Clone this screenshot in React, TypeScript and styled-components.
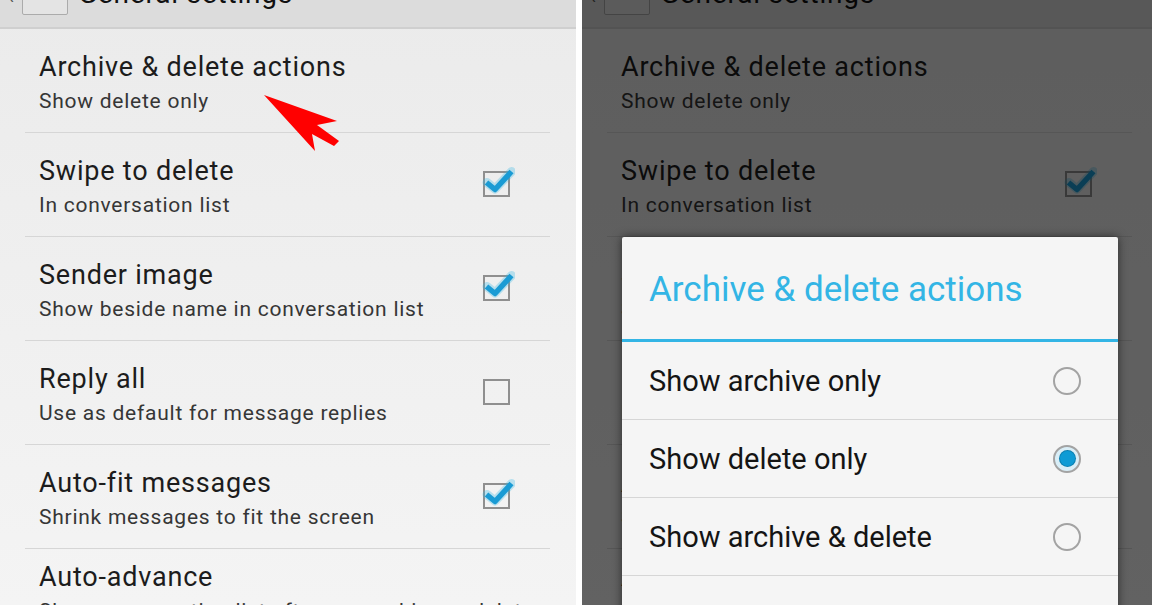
import React from "react";
import styled, { createGlobalStyle } from "styled-components";

const GlobalStyle = createGlobalStyle`
  html, body {
    margin: 0;
    padding: 0;
    background: #ffffff;
    font-family: Roboto, "Noto Sans", sans-serif;
  }
`;

const Page = styled.div`
  width: 1152px;
  height: 605px;
  display: flex;
  gap: 6px;
  overflow: hidden;
  background: #ffffff;
`;

const Panel = styled.div<{ $width: number }>`
  position: relative;
  width: ${(p) => p.$width}px;
  flex: none;
  height: 605px;
  overflow: hidden;
`;

const Screen = styled.div`
  width: 576px;
  height: 100%;
  display: flex;
  flex-direction: column;
  background: linear-gradient(#ebebeb, #f4f4f4);
`;

const TopBar = styled.div`
  height: 60px;
  margin-top: -33px;
  flex: none;
  display: flex;
  align-items: flex-start;
  padding-left: 8px;
  background: #dcdcdc;
  border-bottom: 2px solid #cfcfcf;
`;

const Caret = styled.span`
  width: 14px;
  margin-top: 20px;
  font-size: 20px;
  line-height: 20px;
  color: #555;
`;

const AppIcon = styled.div`
  width: 44px;
  height: 45px;
  margin-top: 1px;
  border: 1px solid #ababab;
  border-radius: 2px;
  background: #e4e4e4;
  display: flex;
  justify-content: center;
  align-items: center;
  &::after {
    content: "";
    width: 4px;
    height: 4px;
    border-radius: 50%;
    background: #fff;
  }
`;

const BarTitle = styled.div`
  margin: 13px 0 0 10px;
  font-size: 28px;
  line-height: 28px;
  letter-spacing: 0.8px;
  color: #111;
`;

const List = styled.div`
  margin: 0 26px 0 25px;
  display: flex;
  flex-direction: column;
`;

const Row = styled.div<{ $top?: number }>`
  height: 104px;
  flex: none;
  box-sizing: border-box;
  padding: ${(p) => p.$top ?? 21}px 35px 0 14px;
  border-bottom: 1px solid #d6d6d6;
  display: flex;
  justify-content: space-between;
  align-items: flex-start;
`;

const RowText = styled.div`
  display: flex;
  flex-direction: column;
`;

const Title = styled.div`
  font-size: 27px;
  line-height: 34px;
  letter-spacing: 0.8px;
  color: #1c1c1c;
  white-space: nowrap;
`;

const Summary = styled.div`
  font-size: 21px;
  line-height: 34px;
  letter-spacing: 0.75px;
  color: #363636;
  white-space: nowrap;
`;

const CheckSvg = styled.svg`
  width: 34px;
  height: 34px;
  flex: none;
  margin-top: 11px;
`;

const Scrim = styled.div`
  position: absolute;
  inset: 0;
  background: rgba(0, 0, 0, 0.6);
`;

const Dialog = styled.div`
  position: absolute;
  left: 40px;
  top: 237px;
  width: 496px;
  background: #f5f5f5;
  border-radius: 2px;
  box-shadow: 0 0 10px rgba(0, 0, 0, 0.55);
`;

const DialogTitle = styled.div`
  height: 105px;
  box-sizing: border-box;
  padding: 34px 0 0 27px;
  font-size: 35px;
  line-height: 38px;
  color: #33b5e5;
  border-bottom: 3px solid #33b5e5;
`;

const Option = styled.div`
  height: 78px;
  box-sizing: border-box;
  padding: 0 37px 0 27px;
  border-bottom: 1px solid #d6d6d6;
  display: flex;
  align-items: center;
  justify-content: space-between;
  font-size: 29px;
  color: #141414;
`;

const Radio = styled.span<{ $checked?: boolean }>`
  width: 28px;
  height: 28px;
  box-sizing: border-box;
  border-radius: 50%;
  border: 2px solid #a3a3a3;
  background: ${(p) => (p.$checked ? "#d9eef7" : "transparent")};
  display: flex;
  align-items: center;
  justify-content: center;
  &::after {
    content: "";
    display: ${(p) => (p.$checked ? "block" : "none")};
    width: 15px;
    height: 15px;
    border-radius: 50%;
    background: #0e9bd5;
    box-shadow: 0 0 0 1px #0b7fb0;
  }
`;

const Cursor = styled.svg`
  position: absolute;
  left: 0;
  top: 0;
  width: 576px;
  height: 605px;
  pointer-events: none;
`;

type Setting = {
  title: string;
  summary: string;
  check?: boolean;
  top?: number;
};

const settings: Setting[] = [
  { title: "Archive & delete actions", summary: "Show delete only" },
  { title: "Swipe to delete", summary: "In conversation list", check: true },
  { title: "Sender image", summary: "Show beside name in conversation list", check: true },
  { title: "Reply all", summary: "Use as default for message replies", check: false },
  { title: "Auto-fit messages", summary: "Shrink messages to fit the screen", check: true },
  { title: "Auto-advance", summary: "Show conversation list after you archive or delete", top: 11 },
];

const options = ["Show archive only", "Show delete only", "Show archive & delete"];

const Checkbox = ({ checked }: { checked: boolean }) => (
  <CheckSvg viewBox="0 0 34 34">
    <rect x="3" y="7" width="25" height="24" fill="none" stroke="#8f8f8f" strokeWidth="2" />
    {checked && (
      <>
        <path
          d="M6 17.5 L14 24 L30.5 6.5"
          fill="none"
          stroke="#33b5e5"
          strokeOpacity="0.3"
          strokeWidth="9"
          strokeLinecap="round"
          strokeLinejoin="round"
        />
        <path
          d="M5.5 17.5 L14 24.5 L30.5 6.5"
          fill="none"
          stroke="#1a9bd4"
          strokeWidth="5.5"
          strokeLinejoin="round"
        />
      </>
    )}
  </CheckSvg>
);

const SettingsScreen = () => (
  <Screen>
    <TopBar>
      <Caret>‹</Caret>
      <AppIcon />
      <BarTitle>General settings</BarTitle>
    </TopBar>
    <List>
      {settings.map((s) => (
        <Row key={s.title} $top={s.top}>
          <RowText>
            <Title>{s.title}</Title>
            <Summary>{s.summary}</Summary>
          </RowText>
          {s.check !== undefined && <Checkbox checked={s.check} />}
        </Row>
      ))}
    </List>
  </Screen>
);

export default function App() {
  return (
    <Page>
      <GlobalStyle />
      <Panel $width={576}>
        <SettingsScreen />
        <Cursor viewBox="0 0 576 605">
          <polygon points="264,95 337,121 317,125 339,141 334,146 312,134 315,151" fill="#ff0000" />
        </Cursor>
      </Panel>
      <Panel $width={570}>
        <SettingsScreen />
        <Scrim />
        <Dialog>
          <DialogTitle>Archive &amp; delete actions</DialogTitle>
          {options.map((o) => (
            <Option key={o}>
              {o}
              <Radio $checked={o === "Show delete only"} />
            </Option>
          ))}
          <Option />
        </Dialog>
      </Panel>
    </Page>
  );
}
